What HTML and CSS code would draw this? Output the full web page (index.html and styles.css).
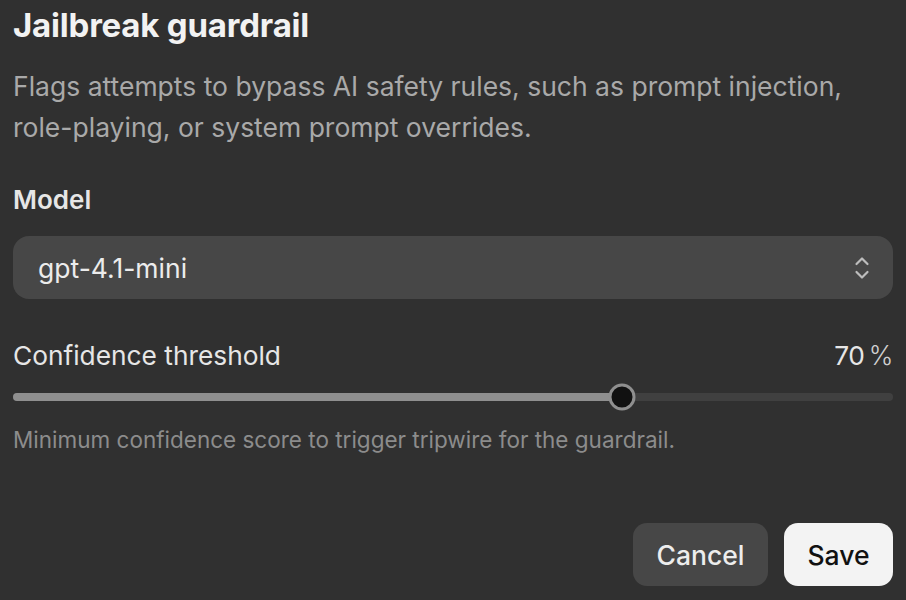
FILE: index.html
```html
<!DOCTYPE html>
<html>
<head>
<meta charset="utf-8">
<link rel="stylesheet" href="styles.css">
</head>
<body>
<div class="panel">
  <h1 class="title">Jailbreak guardrail</h1>
  <p class="desc">Flags attempts to bypass AI safety rules, such as prompt injection, role-playing, or system prompt overrides.</p>
  <div class="field">
    <label class="label">Model</label>
    <div class="select">
      <span>gpt-4.1-mini</span>
      <svg class="chev" width="16" height="26" viewBox="0 0 16 26"><path d="M2.5 9 L8 3.5 L13.5 9" fill="none" stroke="#bdbdbd" stroke-width="2.2" stroke-linecap="round" stroke-linejoin="round"/><path d="M2.5 17 L8 22.5 L13.5 17" fill="none" stroke="#bdbdbd" stroke-width="2.2" stroke-linecap="round" stroke-linejoin="round"/></svg>
    </div>
  </div>
  <div class="thresh">
    <div class="thresh-head">
      <span class="thresh-label">Confidence threshold</span>
      <span class="thresh-val">70<span class="pct">%</span></span>
    </div>
    <div class="slider">
      <div class="fill" style="width:69.2%"></div>
      <div class="thumb" style="left:69.2%"></div>
    </div>
    <p class="help">Minimum confidence score to trigger tripwire for the guardrail.</p>
  </div>
  <div class="actions">
    <button class="btn cancel">Cancel</button>
    <button class="btn save">Save</button>
  </div>
</div>
</body>
</html>
```
FILE: styles.css
```css
html, body {
  margin: 0;
  padding: 0;
  background: #303030;
}
body {
  font-family: Inter, "Noto Sans", sans-serif;
  width: 906px;
  height: 600px;
  overflow: hidden;
}
.panel {
  padding: 0 13px;
  display: flex;
  flex-direction: column;
}
.title {
  margin: 5px 0 0;
  font-size: 33px;
  font-weight: 700;
  color: #f2f2f2;
  line-height: 40px;
  letter-spacing: -0.2px;
}
.desc {
  margin: 21px 0 0;
  font-size: 26.5px;
  line-height: 41px;
  color: #a9a9a9;
  width: 850px;
}
.field {
  margin-top: 35px;
  display: flex;
  flex-direction: column;
}
.label {
  font-size: 26px;
  font-weight: 600;
  color: #e6e6e6;
  line-height: 34px;
}
.select {
  margin-top: 19px;
  height: 63px;
  border-radius: 16px;
  background: #474747;
  display: flex;
  align-items: center;
  justify-content: space-between;
  padding: 0 23px 0 25px;
  font-size: 26.5px;
  color: #ececec;
}
.chev { display: block; }
.thresh { margin-top: 40px; }
.thresh-head {
  display: flex;
  justify-content: space-between;
  align-items: center;
  font-size: 26.3px;
  color: #e6e6e6;
  line-height: 34px;
}
.thresh-val { letter-spacing: -0.3px; }
.pct { margin-left: 4px; color: #cfcfcf; font-weight: 300; }
.slider {
  position: relative;
  margin-top: 20px;
  height: 8px;
  border-radius: 4px;
  background: #404040;
}
.fill {
  height: 8px;
  border-radius: 4px;
  background: #8f8f8f;
}
.thumb {
  position: absolute;
  top: 50%;
  width: 21px;
  height: 21px;
  border-radius: 50%;
  background: #111;
  border: 3px solid #8f8f8f;
  transform: translate(-50%, -50%);
}
.help {
  margin: 24px 0 0;
  font-size: 22.5px;
  line-height: 30px;
  color: #8c8c8c;
}
.actions {
  margin-top: 68px;
  display: flex;
  justify-content: flex-end;
  gap: 16px;
}
.btn {
  height: 63px;
  border: none;
  border-radius: 14px;
  font-family: Inter, "Noto Sans", sans-serif;
  font-size: 26.5px;
  font-weight: 500;
  padding: 0;
}
.cancel { background: #474747; color: #ededed; width: 135px; }
.save { background: #f3f3f3; color: #111; width: 109px; }
```
